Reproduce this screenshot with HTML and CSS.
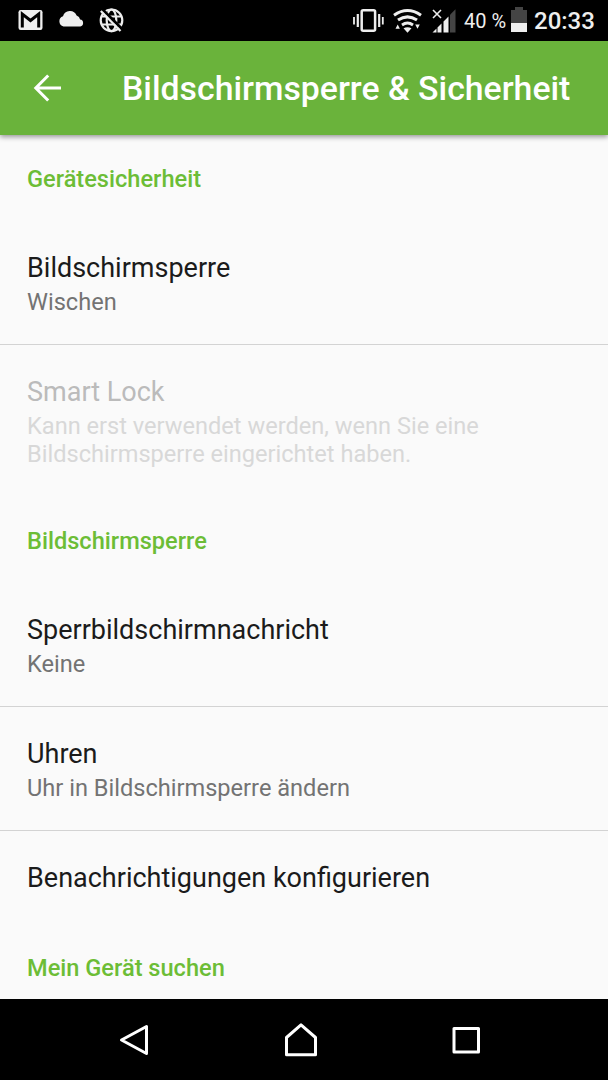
FILE: index.html
```html
<!DOCTYPE html>
<html lang="de">
<head>
<meta charset="utf-8">
<title>Bildschirmsperre &amp; Sicherheit</title>
<link rel="stylesheet" href="styles.css">
</head>
<body>
<div class="screen">
  <div class="status">
    <svg class="status-left" width="130" height="41" viewBox="0 0 130 41">
      <rect x="18.5" y="10" width="24" height="20" rx="2.2" fill="#eee"/>
      <path d="M22.3 27.500V14L30.500 20.500L38.700 14V27.500" fill="none" stroke="#000" stroke-width="3"/>
      <path d="M63.500 26.500a5.300 5.300 0 0 1-.5-10.200 7.200 7.200 0 0 1 13.600-.7 5 5 0 0 1 3.500 4 3.500 3.500 0 0 1 .2 6.900z" fill="#eee"/>
      <g fill="none" stroke="#eee" stroke-width="2.200">
        <circle cx="111.500" cy="20.300" r="10.800"/>
        <ellipse cx="111.500" cy="20.300" rx="4.800" ry="10.800"/>
        <path d="M101.500 16.500h20M101.500 24.500h20"/>
      </g>
      <path d="M103 10L123 30" stroke="#000" stroke-width="3"/>
      <path d="M100.800 11L120.500 31" stroke="#eee" stroke-width="2.300"/>
    </svg>
    <svg class="status-radio" width="110" height="41" viewBox="350 0 110 41">
      <g fill="none" stroke="#eee">
        <rect x="361.700" y="10.200" width="13.400" height="20.600" rx="1.500" stroke-width="2.500"/>
        <path d="M357.800 14v13M379.200 14v13" stroke-width="2.200"/>
        <path d="M354 17v7.500M382.800 17v7.500" stroke-width="1.800"/>
        <path d="M394 15.200q13.500-9.500 27 0M398 20.100q9.500-6.500 19 0M402 24.900q5.500-3.600 11 0" stroke-width="3"/>
        <path d="M433 10l8 8M441 10l-8 8" stroke-width="1.600"/>
      </g>
      <path d="M403.500 28.200q4-2 8 0l-4 4.600zM395.500 28.700l2.200-4.200 2.200 4.200zM415.200 24.500h4.600l-2.300 4.200z" fill="#eee"/>
      <path d="M432.500 32.500l4-4v4zM437.500 27.600l4-4v8.900h-4zM443.500 21.500l5-5v16h-5z" fill="#eee"/>
      <path d="M450 14.800l5.500-5.500v23.200H450z" fill="#444"/>
    </svg>
    <span class="percent">40 %</span>
    <svg class="battery" width="16" height="26" viewBox="0 0 16 26">
      <path d="M0 3h4V0h8v3h4v13H0z" fill="#444"/>
      <path d="M0 16h16v9H0z" fill="#eee"/>
    </svg>
    <span class="clock">20:33</span>
  </div>

  <header class="appbar">
    <svg class="back" width="28" height="28" viewBox="0 0 28 28" fill="none" stroke="#fff" stroke-width="3">
      <path d="M15.200 1.500L2.800 14l12.400 12.500M2.500 14H28"/>
    </svg>
    <h1 class="title">Bildschirmsperre &amp; Sicherheit</h1>
  </header>

  <main class="list">
    <h2 class="category">Gerätesicherheit</h2>
    <div class="row divided">
      <div class="name">Bildschirmsperre</div>
      <div class="summary">Wischen</div>
    </div>
    <div class="row disabled">
      <div class="name">Smart Lock</div>
      <div class="summary">Kann erst verwendet werden, wenn Sie eine<br>Bildschirmsperre eingerichtet haben.</div>
    </div>
    <h2 class="category">Bildschirmsperre</h2>
    <div class="row divided">
      <div class="name">Sperrbildschirmnachricht</div>
      <div class="summary">Keine</div>
    </div>
    <div class="row divided">
      <div class="name">Uhren</div>
      <div class="summary">Uhr in Bildschirmsperre ändern</div>
    </div>
    <div class="row">
      <div class="name">Benachrichtigungen konfigurieren</div>
    </div>
    <h2 class="category">Mein Gerät suchen</h2>
  </main>

  <nav class="navbar">
    <svg width="32" height="36" viewBox="0 0 32 36"><path d="M27.500 3.500V30.500L2.500 17z"/></svg>
    <svg width="36" height="36" viewBox="0 0 36 36"><path d="M3.500 31.800V14.500L18 1.800l14.500 12.700v17.300z"/></svg>
    <svg width="32" height="36" viewBox="0 0 32 36"><path d="M4 5.500h24.500v23.500H4z"/></svg>
  </nav>
</div>
</body>
</html>
```
FILE: styles.css
```css
* {
  box-sizing: border-box;
}

body {
  margin: 0;
  font-family: Roboto, sans-serif;
  background: #fafafa;
}

svg {
  display: block;
  flex: none;
}

.screen {
  display: flex;
  flex-direction: column;
  width: 608px;
  height: 1080px;
  overflow: hidden;
}

.status {
  display: flex;
  flex: none;
  height: 41px;
  background: #000;
  color: #eee;
}

.status-radio {
  margin-left: 220px;
}

.percent {
  width: 51px;
  padding-left: 4px;
  font-size: 20px;
  line-height: 42px;
  white-space: nowrap;
}

.battery {
  margin-top: 7px;
}

.clock {
  margin-left: 7px;
  font-size: 24px;
  font-weight: 500;
  line-height: 42px;
}

.appbar {
  z-index: 1;
  display: flex;
  flex: none;
  align-items: center;
  height: 94px;
  padding-left: 33px;
  background: #6ab33b;
  box-shadow: 0 2px 5px rgba(0, 0, 0, 0.4);
  color: #fff;
}

.title {
  margin: 2px 0 0 61px;
  font-size: 33.8px;
  font-weight: 500;
  line-height: 40px;
  white-space: nowrap;
}

.list {
  flex: 1;
  min-height: 0;
  overflow: hidden;
}

.category {
  height: 86px;
  margin: 0;
  padding: 30px 27px 0;
  color: #6cbd36;
  font-size: 23.6px;
  font-weight: 500;
  line-height: 28px;
}

.row {
  padding: 30px 27px 29px;
  color: #1b1b1b;
}

.divided {
  padding-bottom: 28px;
  border-bottom: 1px solid #d3d3d3;
}

.name {
  font-size: 27px;
  line-height: 34px;
}

.summary {
  margin-top: 3px;
  color: #737373;
  font-size: 23.6px;
  line-height: 28px;
}

.disabled .name {
  color: #bbb;
}

.disabled .summary {
  color: #d8d8d8;
}

.navbar {
  display: flex;
  flex: none;
  justify-content: space-between;
  height: 81px;
  padding: 24px 126px 0 119px;
  background: #000;
}

.navbar path {
  fill: none;
  stroke: #fff;
  stroke-width: 3;
  stroke-linejoin: round;
}
```
